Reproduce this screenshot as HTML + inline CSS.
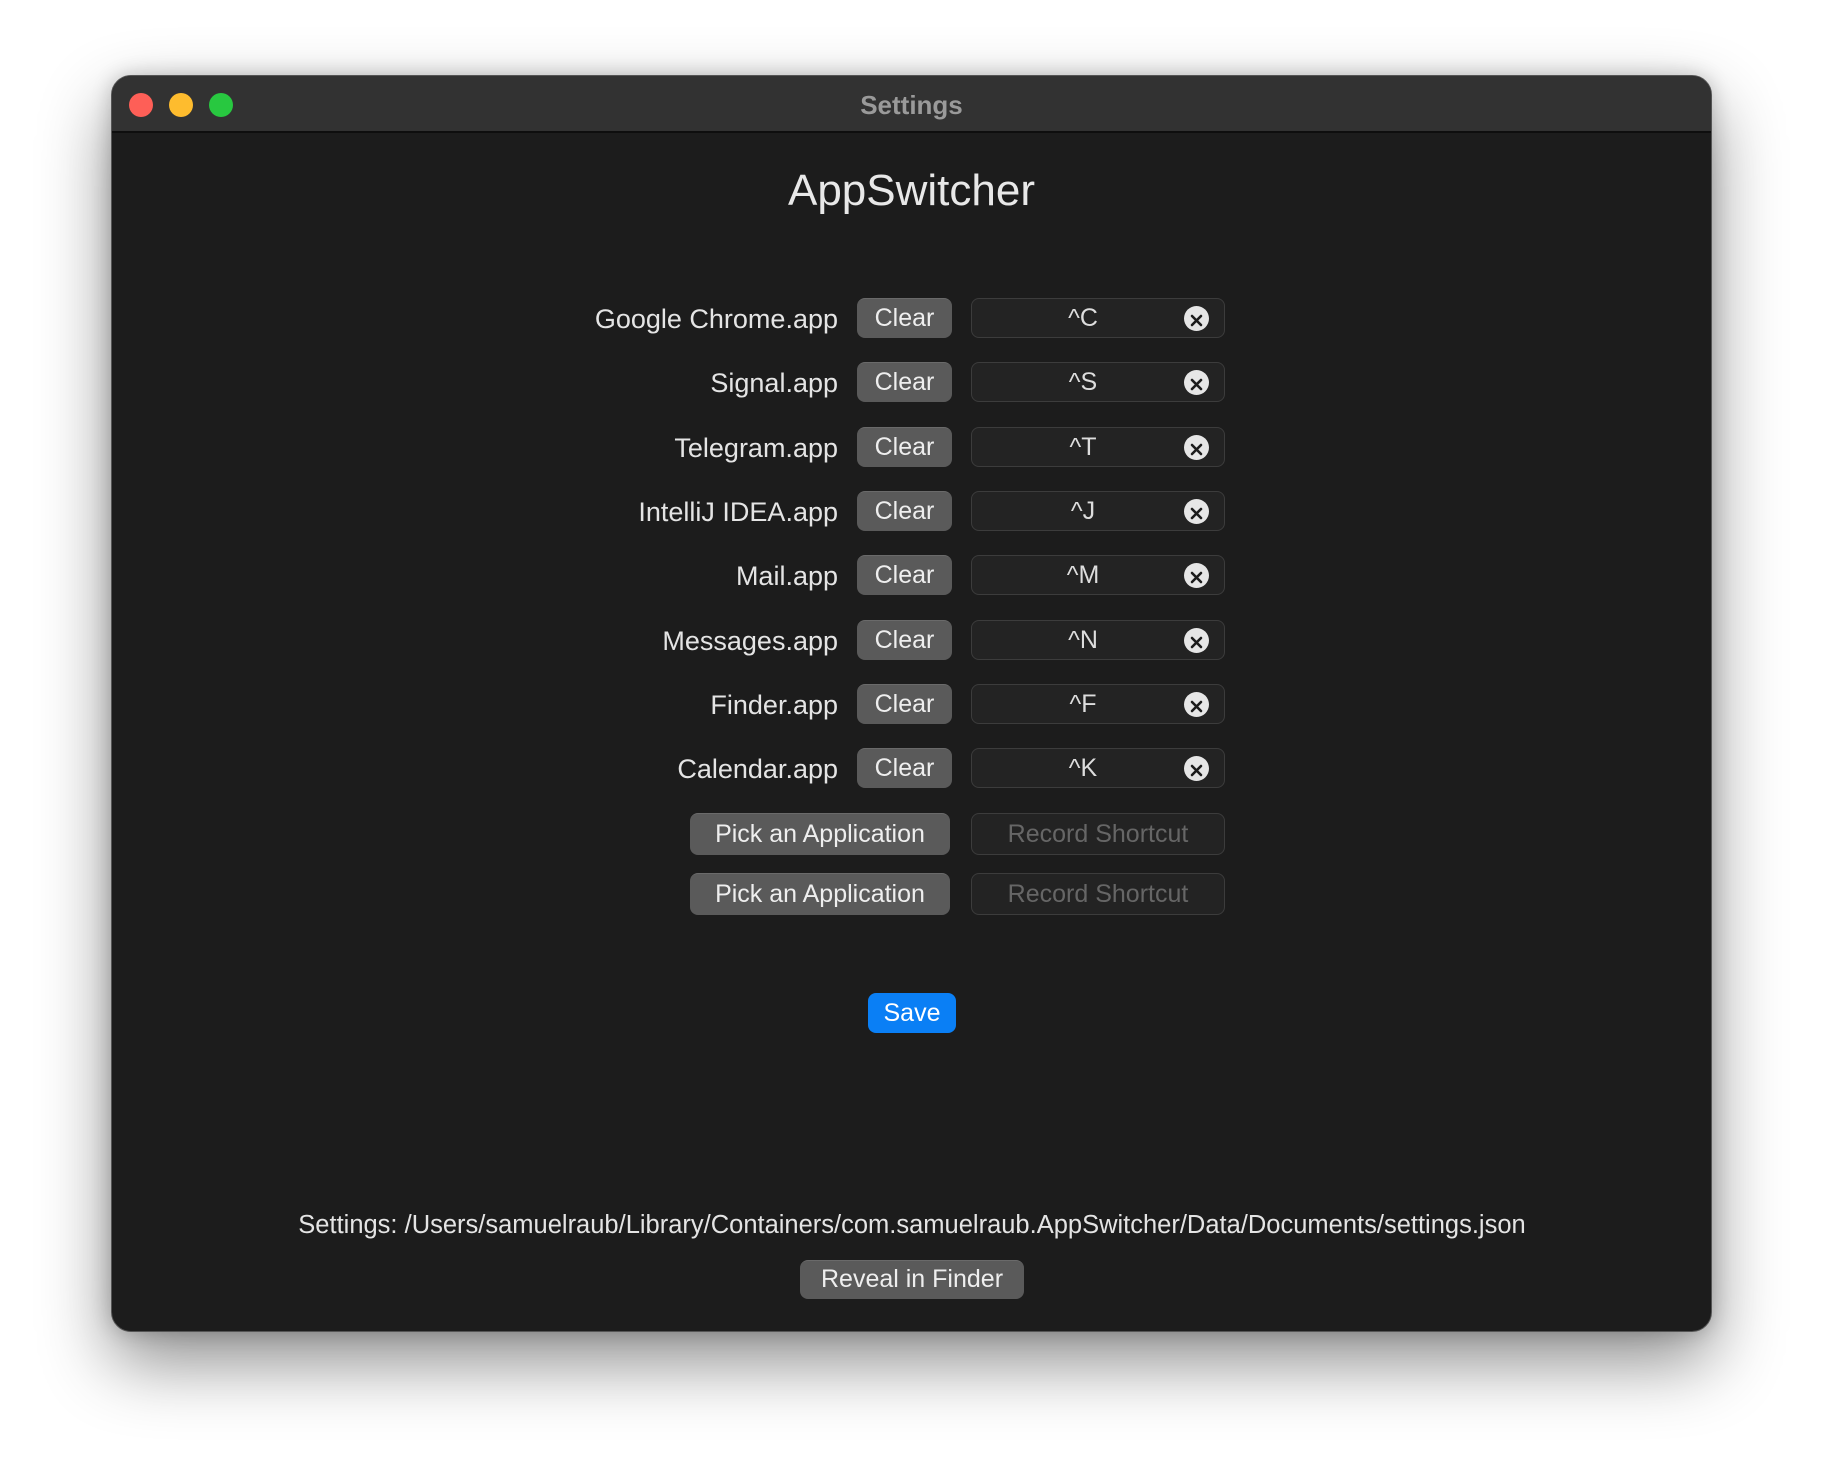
<!DOCTYPE html>
<html><head><meta charset="utf-8"><style>
*{margin:0;padding:0;box-sizing:border-box}
body{width:1824px;height:1480px;background:#fff;position:relative;overflow:hidden;font-family:"Liberation Sans",sans-serif}
.win{position:absolute;left:111px;top:75px;width:1601px;height:1257px;background:#1c1c1c;border-radius:20px;border:1px solid #555;box-shadow:0 30px 70px rgba(0,0,0,.45),0 0 20px rgba(0,0,0,.2);overflow:hidden}
.tb{position:absolute;left:0;top:0;right:0;height:57px;background:#323232;border-bottom:2px solid #0e0e0e}
.tl{position:absolute;top:17px;width:24px;height:24px;border-radius:50%}
.ttl{position:absolute;left:0;right:0;top:14px;text-align:center;color:#9a9a9a;font-weight:bold;font-size:26px}
.a{position:absolute}
.h{left:0;right:0;text-align:center;color:#e8e8e8;font-size:44px;top:90px}
.lbl{color:#e4e4e4;font-size:27px;text-align:right;width:500px}
.btn{background:#5a5a5a;color:#eee;font-size:25px;border-radius:8px;text-align:center;border-top:1px solid #6a6a6a}
.fld{background:#232323;border:1px solid #3c3c3c;border-radius:8px;color:#ddd;font-size:25px}
.x{position:absolute;right:15px;width:25px;height:25px;border-radius:50%;background:#e6e6e6}
</style></head><body>
<div class="win">
<div class="tb">
<div class="tl" style="left:17px;background:#fe5f57"></div>
<div class="tl" style="left:57px;background:#febc2e"></div>
<div class="tl" style="left:97px;background:#28c840"></div>
<div class="ttl">Settings</div>
</div>
<div class="a h">AppSwitcher</div>
</div>
<div id="rows"></div>
<script>
var names=["Google Chrome.app","Signal.app","Telegram.app","IntelliJ IDEA.app","Mail.app","Messages.app","Finder.app","Calendar.app"];
var keys=["C","S","T","J","M","N","F","K"];
var h="";
for(var i=0;i<8;i++){var c=318+i*64.3;var t=c-20;
h+='<div class="a lbl" style="left:338px;top:'+(c-14)+'px">'+names[i]+'</div>';
h+='<div class="a btn" style="left:857px;top:'+t+'px;width:95px;height:40px;line-height:38px">Clear</div>';
h+='<div class="a fld" style="left:971px;top:'+t+'px;width:254px;height:40px;line-height:38px"><span style="position:absolute;left:0;width:222px;text-align:center">^'+keys[i]+'</span><div class="x" style="top:7px"><svg width="25" height="25"><path d="M8 8L17 17M17 8L8 17" stroke="#1c1c1c" stroke-width="2.6" stroke-linecap="round"/></svg></div></div>';}
[834,894].forEach(function(c){var t=c-21;
h+='<div class="a btn" style="left:690px;top:'+t+'px;width:260px;height:42px;line-height:40px">Pick an Application</div>';
h+='<div class="a fld" style="left:971px;top:'+t+'px;width:254px;height:42px;line-height:40px;text-align:center;color:#666">Record Shortcut</div>';});
h+='<div class="a" style="left:868px;top:993px;width:88px;height:40px;line-height:40px;background:#0a7ff5;color:#fff;font-size:25px;text-align:center;border-radius:8px">Save</div>';
h+='<div class="a" style="left:0;width:1824px;top:1211px;text-align:center;color:#e4e4e4;font-size:25.5px">Settings: /Users/samuelraub/Library/Containers/com.samuelraub.AppSwitcher/Data/Documents/settings.json</div>';
h+='<div class="a btn" style="left:800px;top:1260px;width:224px;height:39px;line-height:37px">Reveal in Finder</div>';
document.getElementById("rows").innerHTML=h;
</script>
</body></html>
